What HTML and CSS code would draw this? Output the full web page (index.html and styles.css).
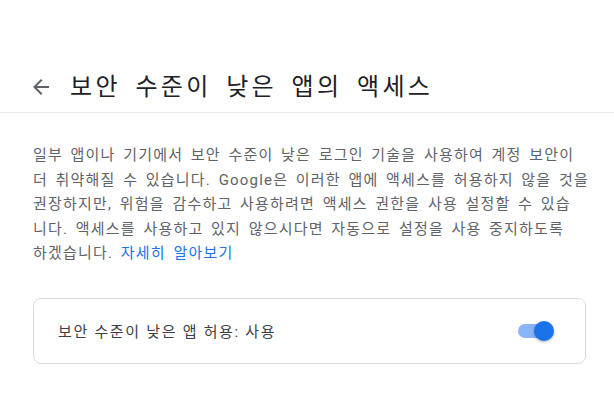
FILE: index.html
```html
<!DOCTYPE html>
<html lang="ko">
<head>
<meta charset="utf-8">
<link rel="stylesheet" href="styles.css">
</head>
<body>
<header class="header">
  <svg class="back" width="24" height="24" viewBox="0 0 24 24"><path d="M20 11H7.83l5.59-5.59L12 4l-8 8 8 8 1.41-1.41L7.83 13H20v-2z" fill="#5f6368"/></svg>
  <h1 class="title">보안 수준이 낮은 앱의 액세스</h1>
</header>
<main class="content">
  <p class="desc">일부 앱이나 기기에서 보안 수준이 낮은 로그인 기술을 사용하여 계정 보안이<br>더 취약해질 수 있습니다. Google은 이러한 앱에 액세스를 허용하지 않을 것을<br>권장하지만, 위험을 감수하고 사용하려면 액세스 권한을 사용 설정할 수 있습<br>니다. 액세스를 사용하고 있지 않으시다면 자동으로 설정을 사용 중지하도록<br>하겠습니다. <a class="link" href="#">자세히 알아보기</a></p>
  <div class="card">
    <span class="card-label">보안 수준이 낮은 앱 허용: 사용</span>
    <span class="toggle"><span class="track"></span><span class="knob"></span></span>
  </div>
</main>
</body>
</html>
```
FILE: styles.css
```css
html, body {
  margin: 0;
  padding: 0;
  background: #fff;
}
body {
  font-family: Roboto, "Noto Sans CJK KR", sans-serif;
  width: 614px;
  height: 405px;
  overflow: hidden;
}
.header {
  display: flex;
  align-items: center;
  height: 113px;
  padding: 62px 0 0 29px;
  box-sizing: border-box;
  border-bottom: 1px solid #e8eaed;
}
.back {
  display: block;
  flex: none;
}
.title {
  margin: 0 0 0 17px;
  font-size: 24px;
  font-weight: 400;
  color: #202124;
  line-height: 32px;
  letter-spacing: 3.3px;
  word-spacing: 5.4px;
  white-space: nowrap;
}
.content {
  padding: 0 28px 0 33px;
}
.desc {
  margin: 30px 0 0;
  font-size: 15px;
  line-height: 24.5px;
  color: #5f6368;
  letter-spacing: 1.2px;
  word-spacing: 2.7px;
  white-space: nowrap;
}
.link {
  color: #1a73e8;
  text-decoration: none;
}
.card {
  margin-top: 32px;
  height: 66px;
  box-sizing: border-box;
  border: 1px solid #dadce0;
  border-radius: 8px;
  display: flex;
  align-items: center;
  justify-content: space-between;
  padding: 0 31px 0 24px;
}
.card-label {
  font-size: 15px;
  color: #3c4043;
  letter-spacing: 1.6px;
  word-spacing: 0.3px;
}
.toggle {
  position: relative;
  width: 36px;
  height: 20px;
  display: block;
}
.track {
  position: absolute;
  left: 0;
  top: 3px;
  width: 34px;
  height: 14px;
  border-radius: 7px;
  background: #8ab4f8;
}
.knob {
  position: absolute;
  right: 0;
  top: 0;
  width: 20px;
  height: 20px;
  border-radius: 50%;
  background: #1a73e8;
  box-shadow: 0 1px 3px rgba(0,0,0,0.3);
}
```
